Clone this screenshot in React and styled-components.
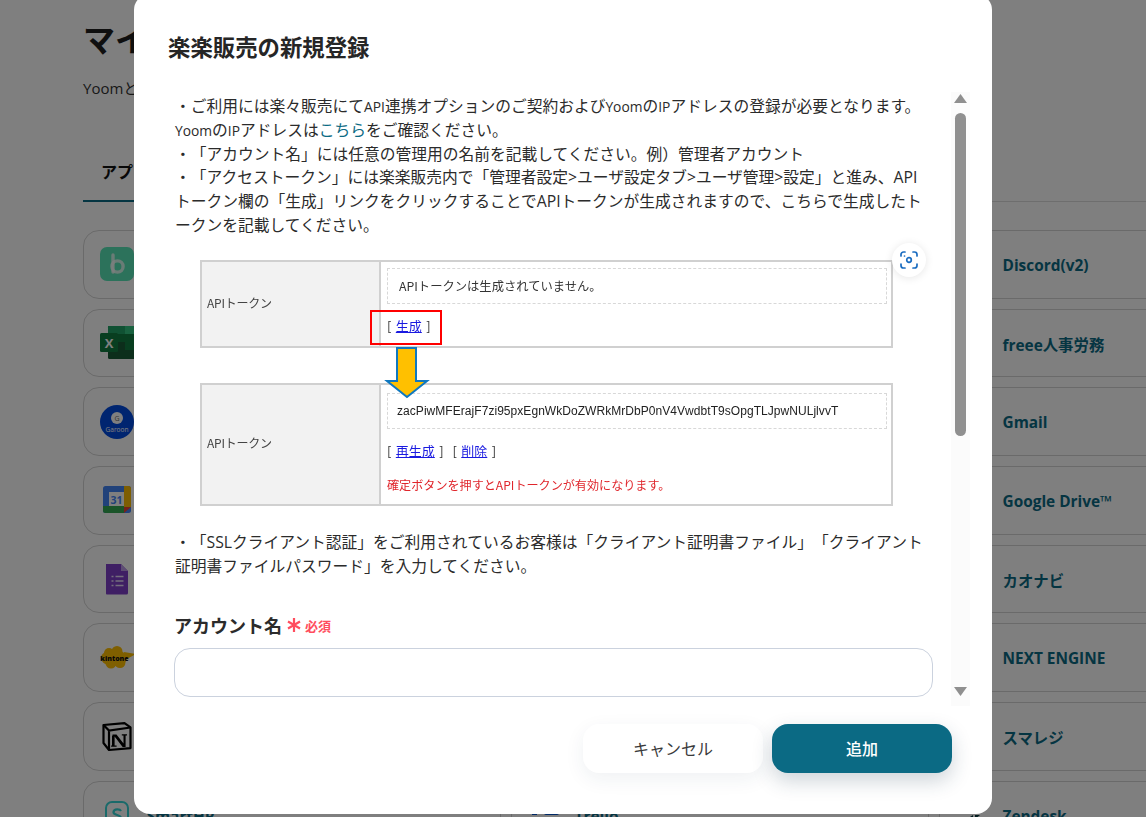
import React from "react";
import styled, { createGlobalStyle } from "styled-components";

const sans = `"Open Sans", "Noto Sans CJK JP", sans-serif`;
const teal = "#0b6a84";

const Global = createGlobalStyle`
  html, body { margin: 0; padding: 0; background: #fff; }
  * { box-sizing: border-box; }
  body { font-family: ${sans}; color: #262626; text-spacing-trim: space-all; }
`;

const Page = styled.div`
  position: relative;
  width: 1146px;
  height: 817px;
  overflow: hidden;
  padding-left: 83px;
`;
const PageTitle = styled.h1`
  margin: 0;
  padding-top: 18px;
  font-size: 32px;
  line-height: 44px;
  font-weight: 700;
  color: #1e1e1e;
`;
const PageLead = styled.p`
  margin: 15px 0 0;
  font-size: 15px;
  line-height: 22px;
  color: #333;
`;
const Tabs = styled.div`
  margin-top: 53px;
  height: 50px;
  border-bottom: 1px solid #ddd;
  display: flex;
`;
const Tab = styled.div`
  width: 190px;
  height: 50px;
  padding: 9px 0 0 18px;
  font-size: 16px;
  line-height: 22px;
  font-weight: 700;
  color: #111;
  border-bottom: 2px solid ${teal};
`;
const CardGrid = styled.div`
  margin-top: 28px;
  display: grid;
  grid-template-columns: repeat(3, 418px);
  grid-auto-rows: 68.7px;
  gap: 10px;
`;
const Card = styled.div`
  display: flex;
  align-items: center;
  gap: 12.5px;
  padding-left: 16px;
  border: 1px solid #d4d4d4;
  border-radius: 16px;
  background: #fff;
`;
const CardLogo = styled.svg`
  width: 34px;
  height: 34px;
  flex: none;
  overflow: visible;
`;
const CardName = styled.span`
  margin-top: 2px;
  font-size: 15.4px;
  font-weight: 700;
  color: ${teal};
  white-space: nowrap;
`;

const Overlay = styled.div`
  position: absolute;
  inset: 0;
  background: rgba(0, 0, 0, 0.5);
  padding-left: 134px;
`;
const Modal = styled.div`
  width: 858px;
  height: 820px;
  margin-top: -6px;
  padding: 34px 40px 0 34px;
  background: #fff;
  border-radius: 16px;
`;
const ModalTitle = styled.h2`
  margin: 0 0 24px;
  height: 40px;
  font-size: 22.4px;
  line-height: 40px;
  font-weight: 700;
  color: #262626;
`;
const ModalBody = styled.div`
  display: flex;
  height: 614px;
  margin-right: -18px;
`;
const ScrollArea = styled.div`
  flex: 1;
  min-width: 0;
  overflow: hidden;
  padding: 3px 18px 0 6px;
`;
const Para = styled.p`
  margin: 0;
  padding: 0 6px 0 1px;
  font-size: 15.75px;
  line-height: 23.8px;
  color: #2b2b2b;
`;
const Latin = styled.span`
  font-size: 13.8px;
`;
const TextLink = styled.a`
  color: ${teal};
`;
const Shot = styled.div`
  position: relative;
  width: 693px;
  margin: 22px 0 25px 26px;
  font-family: "Noto Sans CJK JP", sans-serif;
  font-size: 12px;
  color: #333;
`;
const ShotTable = styled.div`
  display: grid;
  grid-template-columns: 179px 1fr;
  height: ${(p) => p.$h}px;
  margin-bottom: ${(p) => p.$mb || 0}px;
  border: 2px solid #d0d0d0;
  filter: blur(0.25px);
`;
const ShotHead = styled.div`
  display: flex;
  align-items: center;
  padding: 0 0 3px 5px;
  background: #f2f2f2;
  border-right: 2px solid #d0d0d0;
  color: #444;
  letter-spacing: -0.25px;
`;
const ShotCell = styled.div`
  display: flex;
  flex-direction: column;
  padding: ${(p) => p.$pt}px 4px 0 6px;
`;
const DashedBox = styled.div`
  height: ${(p) => p.$h}px;
  display: flex;
  align-items: center;
  padding-left: ${(p) => p.$pl}px;
  border: 1px dashed #d8d8d8;
  font-size: 12.3px;
  white-space: nowrap;
`;
const TokenText = styled.span`
  font-family: "Liberation Sans", sans-serif;
  font-size: 12px;
  color: #222;
  letter-spacing: 0.05px;
`;
const ShotLine = styled.div`
  margin-top: ${(p) => p.$mt}px;
  font-size: 13px;
  line-height: 18px;
  white-space: nowrap;
  word-spacing: 1.5px;
`;
const ShotLink = styled.a`
  color: #1a1ae0;
  text-decoration: underline;
`;
const ShotWarn = styled.div`
  margin-top: 16px;
  line-height: 18px;
  font-size: 12.1px;
  color: #e0262c;
  white-space: nowrap;
`;
const RedBox = styled.div`
  position: absolute;
  left: 170px;
  top: 50px;
  width: 72px;
  height: 35px;
  border: 2px solid #f00;
`;
const Arrow = styled.svg`
  position: absolute;
  left: 184px;
  top: 87px;
  width: 46px;
  height: 52px;
`;
const ZoomButton = styled.button`
  position: absolute;
  left: 692px;
  top: -17px;
  width: 34px;
  height: 34px;
  padding: 0;
  display: flex;
  align-items: center;
  justify-content: center;
  border: 0;
  border-radius: 50%;
  background: #fff;
  box-shadow: 0 1px 8px rgba(0, 0, 0, 0.1);
`;
const FieldLabel = styled.div`
  display: flex;
  align-items: center;
  margin-top: 34px;
  height: 26px;
  font-size: 18px;
  font-weight: 700;
  color: #2b2b2b;
`;
const Asterisk = styled.svg`
  width: 14px;
  height: 14px;
  margin-left: 5px;
`;
const Required = styled.span`
  margin-left: 4px;
  font-size: 13px;
  font-weight: 700;
  color: #ff4d5e;
`;
const TextInput = styled.input`
  display: block;
  width: 759px;
  height: 49px;
  margin-top: 10px;
  border: 1px solid #cbd2de;
  border-radius: 16px;
  background: #fff;
`;
const Track = styled.div`
  flex: none;
  width: 19px;
  background: #fbfbfb;
  display: flex;
  flex-direction: column;
  align-items: center;
`;
const TrackArrow = styled.svg`
  flex: none;
  width: 13px;
  height: 9px;
  margin: ${(p) => p.$m};
`;
const Thumb = styled.div`
  flex: none;
  width: 11px;
  height: 323px;
  margin-top: 10px;
  border-radius: 6px;
  background: #8f8f8f;
`;
const TrackSpacer = styled.div`
  flex: 1;
`;
const Footer = styled.div`
  display: flex;
  justify-content: flex-end;
  gap: 9px;
  margin-top: 18px;
`;
const Button = styled.button`
  width: 180px;
  height: 49px;
  padding-bottom: 2px;
  border: 0;
  border-radius: 16px;
  font-family: ${sans};
  font-size: 16px;
  font-weight: ${(p) => (p.$primary ? 500 : 400)};
  color: ${(p) => (p.$primary ? "#fff" : "#3a3a3a")};
  background: ${(p) => (p.$primary ? teal : "#fff")};
  box-shadow: ${(p) =>
    p.$primary ? "0 8px 20px rgba(30, 60, 80, 0.22)" : "0 6px 20px rgba(30, 60, 80, 0.07)"};
`;

const logos = {
  bcart: (
    <>
      <rect width="34" height="34" rx="7" fill="#58e4b6" />
      <path d="M13 8v17" stroke="#fff" strokeWidth="3.4" strokeLinecap="round" opacity=".75" />
      <circle cx="17.5" cy="19.5" r="5.6" fill="none" stroke="#fff" strokeWidth="3.4" opacity=".75" />
    </>
  ),
  excel: (
    <>
      <rect x="8" y="0" width="34" height="33" rx="1.5" fill="#185c37" />
      <rect x="25" y="0" width="17" height="8" fill="#33c481" />
      <rect x="8" y="0" width="17" height="8" fill="#21a366" />
      <rect x="8" y="8" width="17" height="8" fill="#107c41" />
      <rect x="25" y="8" width="17" height="16" fill="#107c41" />
      <rect x="0" y="7" width="18" height="19" rx="1.5" fill="#107c41" />
      <text x="9" y="21.5" textAnchor="middle" fontSize="13" fontWeight="700" fill="#fff" fontFamily="Open Sans">X</text>
    </>
  ),
  garoon: (
    <>
      <circle cx="17" cy="17" r="17" fill="#014ae0" />
      <circle cx="17" cy="13" r="6" fill="#fff" />
      <text x="17" y="15.5" textAnchor="middle" fontSize="7" fill="#666" fontFamily="Open Sans">G</text>
      <text x="17" y="27" textAnchor="middle" fontSize="6.5" fill="#fff" fontFamily="Open Sans">Garoon</text>
    </>
  ),
  gcal: (
    <>
      <rect x="3" y="3" width="28" height="27" rx="2.5" fill="#4285f4" />
      <path d="M24 3h4.5A2.5 2.5 0 0 1 31 5.5V24h-7z" fill="#fbbc04" />
      <path d="M3 23h21v7H5.5A2.5 2.5 0 0 1 3 27.5z" fill="#34a853" />
      <path d="M24 24h7l-7 6z" fill="#ea4335" />
      <rect x="9" y="9" width="15" height="14" fill="#fff" />
      <text x="16.5" y="20.5" textAnchor="middle" fontSize="10.5" fontWeight="700" fill="#4285f4" fontFamily="Open Sans">31</text>
    </>
  ),
  gform: (
    <>
      <path d="M6 2h15l7 7v22a1.5 1.5 0 0 1-1.5 1.5h-20A1.5 1.5 0 0 1 6 31z" fill="#7e3fc8" />
      <path d="M21 2l7 7h-7z" fill="#bb9ae6" />
      <path d="M11.5 14.5h2M15.500 14.500h8M11.500 19h2M15.500 19h8M11.500 23.500h2M15.500 23.500h8" stroke="#e8dcf8" strokeWidth="1.6" />
    </>
  ),
  kintone: (
    <>
      <ellipse cx="14" cy="17" rx="13" ry="8" fill="#ffbe00" />
      <circle cx="9" cy="12" r="5" fill="#ffbe00" />
      <circle cx="17" cy="10.500" r="5.500" fill="#ffbe00" />
      <circle cx="11" cy="22" r="5.500" fill="#ffbe00" />
      <circle cx="20" cy="21.500" r="5.500" fill="#ffbe00" />
      <path d="M24 11l12 2-11 6z" fill="#ffbe00" />
      <text x="14.500" y="19.500" textAnchor="middle" fontSize="7" fontWeight="800" fill="#111" fontFamily="Open Sans">kintone</text>
    </>
  ),
  notion: (
    <>
      <path d="M3.5 6l21-1.8 6 4.2v20.700L9 31l-5.500-7z" fill="#fff" stroke="#000" strokeWidth="2.200" strokeLinejoin="round" />
      <path d="M3.500 6L9 11.500l21.500-3M9 11.500V31" fill="none" stroke="#000" strokeWidth="2.200" />
      <path d="M12.500 15.500h4l7 9v-8h-1.700v-1.300h5.200v1.300h-1.400V28h-3l-8-10.500v9h2v1.300h-5.500v-1.300H12V16.800h.5z" fill="#000" />
    </>
  ),
  smarthr: (
    <>
      <rect x="6" y="4" width="22" height="26" rx="6" fill="none" stroke="#35d5d5" strokeWidth="2" />
      <path d="M21 13c-1-2-7-2.500-7.500 1s7.500 2.500 7.500 6-6.500 3.500-8 1" fill="none" stroke="#35d5d5" strokeWidth="2.200" />
    </>
  ),
  trello: (
    <>
      <rect x="4" y="-13" width="5" height="30" fill="#0052cc" />
      <rect x="16" y="-13" width="15" height="30" rx="2" fill="#0052cc" />
      <rect x="19" y="-10" width="9" height="14" fill="#2684ff" />
    </>
  ),
  zendesk: <path d="M11 21l6-4v4zM19 17h5l-5 4z" fill="#03363d" />,
};

const rows = [
  { left: "bcart", right: "Discord(v2)" },
  { left: "excel", right: "freee人事労務" },
  { left: "garoon", right: "Gmail" },
  { left: "gcal", right: "Google Drive™" },
  { left: "gform", right: "カオナビ" },
  { left: "kintone", right: "NEXT ENGINE" },
  { left: "notion", right: "スマレジ" },
  { left: "smarthr", leftName: "SmartHR", mid: "trello", midName: "Trello", rightLogo: "zendesk", right: "Zendesk" },
];

const AppCard = ({ logo, name }) => (
  <Card>
    <CardLogo viewBox="0 0 34 34">{logos[logo]}</CardLogo>
    {name && <CardName>{name}</CardName>}
  </Card>
);

export default function App() {
  return (
    <Page>
      <Global />
      <PageTitle>マイアプリ</PageTitle>
      <PageLead>Yoomと連携するアプリを管理します。</PageLead>
      <Tabs>
        <Tab>アプリ</Tab>
      </Tabs>
      <CardGrid>
        {rows.map((r) => (
          <React.Fragment key={r.left}>
            <AppCard logo={r.left} name={r.leftName} />
            <AppCard logo={r.mid} name={r.midName} />
            <AppCard logo={r.rightLogo} name={r.right} />
          </React.Fragment>
        ))}
      </CardGrid>
      <Overlay>
        <Modal>
          <ModalTitle>楽楽販売の新規登録</ModalTitle>
          <ModalBody>
            <ScrollArea>
              <Para>
                ・ご利用には楽々販売にて<Latin>API</Latin>連携オプションのご契約および<Latin>Yoom</Latin>の<Latin>IP</Latin>アドレスの登録が必要となります。
                <br />
                <Latin>Yoom</Latin>の<Latin>IP</Latin>アドレスは<TextLink>こちら</TextLink>をご確認ください。
                <br />
                ・「アカウント名」には任意の管理用の名前を記載してください。例）管理者アカウント
                <br />
                ・「アクセストークン」には楽楽販売内で「管理者設定&gt;ユーザ設定タブ&gt;ユーザ管理&gt;設定」と進み、APIトークン欄の「生成」リンクをクリックすることでAPIトークンが生成されますので、こちらで生成したトークンを記載してください。
              </Para>
              <Shot>
                <ShotTable $h={88} $mb={35}>
                  <ShotHead>APIトークン</ShotHead>
                  <ShotCell $pt={6}>
                    <DashedBox $h={36} $pl={11}>APIトークンは生成されていません。</DashedBox>
                    <ShotLine $mt={13}>[ <ShotLink>生成</ShotLink> ]</ShotLine>
                  </ShotCell>
                </ShotTable>
                <ShotTable $h={123}>
                  <ShotHead>APIトークン</ShotHead>
                  <ShotCell $pt={8}>
                    <DashedBox $h={36} $pl={9}>
                      <TokenText>zacPiwMFErajF7zi95pxEgnWkDoZWRkMrDbP0nV4VwdbtT9sOpgTLJpwNULjlvvT</TokenText>
                    </DashedBox>
                    <ShotLine $mt={13}>[ <ShotLink>再生成</ShotLink> ]&nbsp; [ <ShotLink>削除</ShotLink> ]</ShotLine>
                    <ShotWarn>確定ボタンを押すとAPIトークンが有効になります。</ShotWarn>
                  </ShotCell>
                </ShotTable>
                <RedBox />
                <Arrow viewBox="0 0 46 52">
                  <path d="M13 1h19v33h11L23 50 3 34h10z" fill="#ffc000" stroke="#0f78c0" strokeWidth="2" />
                </Arrow>
                <ZoomButton aria-label="画像を拡大">
                  <svg width="20" height="20" viewBox="0 0 20 20" fill="none" stroke="#1a6cc0" strokeWidth="1.7" strokeLinecap="round">
                    <path d="M2 6V4.500A2.500 2.500 0 0 1 4.500 2H6M14 2h1.500A2.500 2.500 0 0 1 18 4.500V6M18 14v1.500a2.500 2.500 0 0 1-2.500 2.500H14M6 18H4.500A2.500 2.500 0 0 1 2 15.500V14" />
                    <circle cx="10" cy="10" r="2.300" />
                    <path d="M5.500 6h.01" />
                  </svg>
                </ZoomButton>
              </Shot>
              <Para>
                ・「SSLクライアント認証」をご利用されているお客様は「クライアント証明書ファイル」「クライアント証明書ファイルパスワード」を入力してください。
              </Para>
              <FieldLabel>
                アカウント名
                <Asterisk viewBox="0 0 14 14" fill="none" stroke="#ff4d5e" strokeWidth="2.200">
                  <path d="M7 0v14M1 3.500l12 7M13 3.500l-12 7" />
                </Asterisk>
                <Required>必須</Required>
              </FieldLabel>
              <TextInput />
            </ScrollArea>
            <Track>
              <TrackArrow $m="2px 0 0 0" viewBox="0 0 13 9">
                <path d="M6.500 0L13 9H0z" fill="#8f8f8f" />
              </TrackArrow>
              <Thumb />
              <TrackSpacer />
              <TrackArrow $m="0 0 10px 0" viewBox="0 0 13 9">
                <path d="M0 0h13L6.500 9z" fill="#8f8f8f" />
              </TrackArrow>
            </Track>
          </ModalBody>
          <Footer>
            <Button>キャンセル</Button>
            <Button $primary>追加</Button>
          </Footer>
        </Modal>
      </Overlay>
    </Page>
  );
}
